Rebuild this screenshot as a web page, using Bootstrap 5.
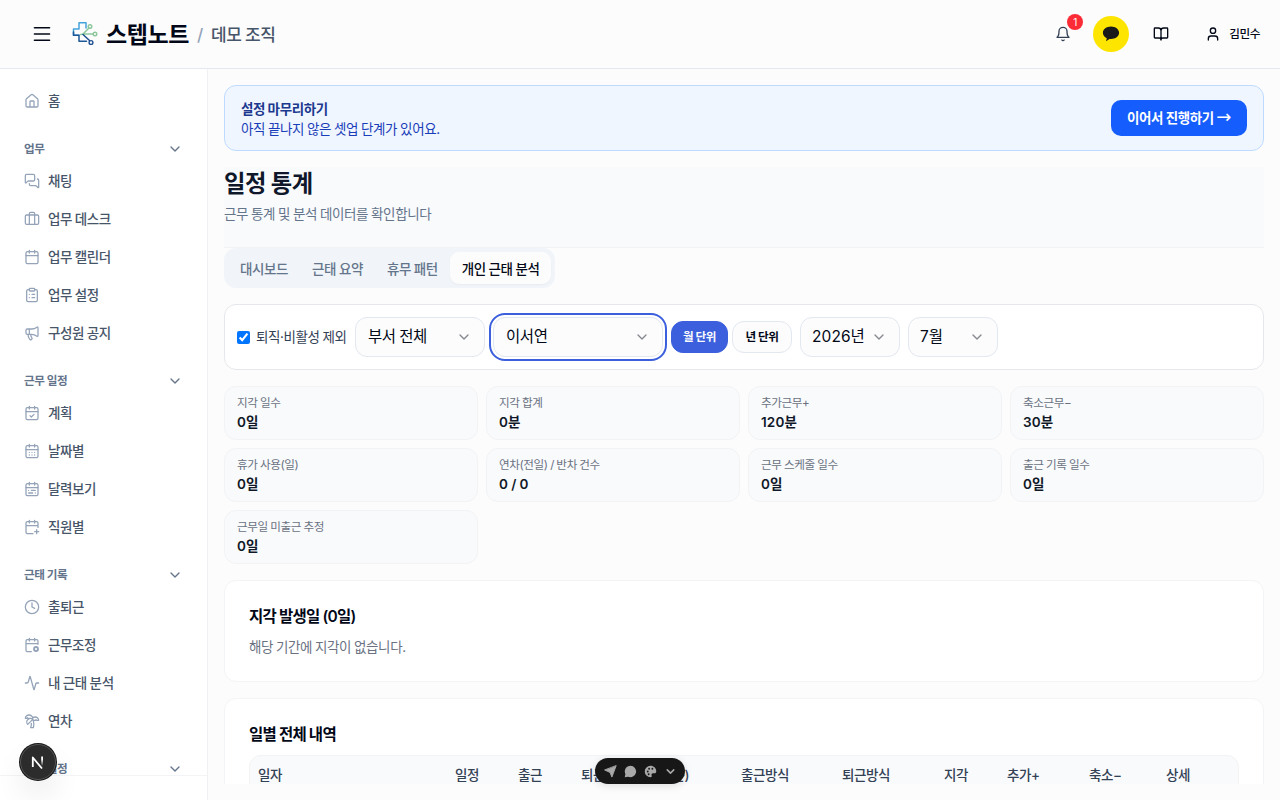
<!DOCTYPE html>
<html lang="ko">
<head>
<meta charset="utf-8">
<meta name="viewport" content="width=device-width, initial-scale=1">
<title>일정 통계 - 스텝노트</title>
<link href="https://cdn.jsdelivr.net/npm/bootstrap@5.3.0/dist/css/bootstrap.min.css" rel="stylesheet">
<style>
  body { font-family: Inter, "Noto Sans CJK KR", sans-serif; font-size: 13.5px; line-height: 20px; letter-spacing: -.03em; word-spacing: -.03em; color: #020817; background: #fcfcfc; height: 100vh; overflow: hidden; }
  svg { fill: none; stroke: currentColor; stroke-width: 2; stroke-linecap: round; stroke-linejoin: round; flex: none; display: block; }
  svg.i16 { width: 16px; height: 16px; }
  .topbar { height: 69px; border-bottom: 1px solid #e2e8f0; padding: 0 20px 0 32px; }
  .brand-name { font-size: 23px; font-weight: 700; line-height: 32px; padding-top: 2px; margin-left: 7px; }
  .org-name { font-size: 17px; font-weight: 500; color: #475569; line-height: 28px; padding-top: 2px; }
  .bell-count { top: -12px; right: -12px; width: 16px; height: 16px; font-size: 10px; line-height: 16px; background: #fb2c36; color: #fff; text-align: center; letter-spacing: 0; }
  .kakao { width: 36px; height: 36px; background: #fee500; color: #191919; }
  .side { width: 208px; background: #fff; border-right: 1px solid #f1f1f3; }
  .side-nav { height: 706px; padding: 13px 24px 0; overflow: hidden; }
  .side-foot { border-top: 1px solid #f3f4f6; }
  .side-item { height: 38px; gap: 8px; font-weight: 500; color: #475569; }
  .side-item svg { color: #94a3b8; stroke-width: 1.9; }
  .side-head { height: 27px; margin-top: 15px; font-size: 11.6px; font-weight: 600; color: #64748b; }
  .main-area { padding: 16px; overflow: hidden; }
  .main-clip { height: 699px; overflow: hidden; }
  .setup { height: 66px; padding: 1px 16px 0; background: #eff6ff; border: 1px solid #bedbff; border-radius: 12px; color: #193cb8; }
  .setup-title { font-weight: 600; color: #1c398e; }
  .setup-btn { width: 136px; height: 36px; text-align: center; white-space: nowrap; line-height: 37px; margin-top: -1px; background: #155dfc; color: #fff; font-weight: 600; border-radius: 10px; }
  .setup-btn span { font-family: "DejaVu Sans", sans-serif; font-size: 18px; font-weight: 400; line-height: 1; }
  .page-head { height: 81px; margin-top: 16px; padding-top: 1px; background: #f9fafc; border-bottom: 1px solid #f1f3f5; }
  .page-head h1 { font-size: 23.3px; font-weight: 700; line-height: 32px; color: #0f172a; margin: 0 0 4px; }
  .page-head p { color: #64748b; margin: 0; }
  .tabs { display: inline-flex; height: 40px; padding: 4px; background: #f1f5f9; border-radius: 12px; font-weight: 500; color: #64748b; }
  .tabs span { padding: 7px 12px 5px; border-radius: 9px; white-space: nowrap; }
  .tabs .on { background: #fcfcfc; color: #020817; box-shadow: 0 1px 2px rgba(0,0,0,.04); }
  .filters { height: 66px; margin-top: 16px; padding: 0 12px; background: #fff; border: 1px solid #e5e7eb; border-radius: 12px; }
  .filters input { width: 13px; height: 13px; margin: 0 6px 0 0; }
  .excl { width: 110px; margin-right: 8px; color: #334155; white-space: nowrap; }
  .pick { height: 40px; padding: 0 12px; font-size: 15.5px; border: 1px solid #e2e8f0; border-radius: 12px; background: #fcfcfc; white-space: nowrap; }
  .pick svg { color: #85888f; }
  .pick.numeric { letter-spacing: .005em; padding-left: 11px; }
  .pick.focused { outline: 2px solid #3b5fdd; outline-offset: 2px; }
  .unit { height: 32px; line-height: 30px; text-align: center; font-size: 11.6px; font-weight: 600; border: 1px solid #e2e8f0; border-radius: 12px; background: #fcfcfc; }
  .unit.on { background: #3b5fdd; border-color: #3b5fdd; color: #f8fafc; }
  .w130 { width: 130px; } .w170 { width: 170px; } .w57 { width: 57px; } .w60 { width: 60px; } .w100 { width: 100px; } .w90 { width: 90px; }
  .stats { display: grid; grid-template-columns: repeat(4, 1fr); gap: 8px; margin-top: 16px; }
  .stat { height: 54px; padding: 8px 12px 6px; background: #f9fafc; border: 1px solid #f1f3f5; border-radius: 12px; }
  .stat div { font-size: 11.6px; line-height: 16px; color: #6a7282; }
  .stat b { display: block; font-weight: 600; line-height: 20px; margin-top: 1px; color: #101828; letter-spacing: .01em; }
  .panel { margin-top: 16px; padding: 24px; background: #fff; border: 1px solid #f3f4f6; border-radius: 12px; }
  .panel h2 { font-size: 15.5px; font-weight: 600; line-height: 24px; margin: 0; letter-spacing: -.045em; }
  .tbl-wrap { margin-top: 8px; height: 200px; border: 1px solid #f1f3f5; border-radius: 12px; background: #f9fafc; overflow: hidden; }
  .tbl-wrap table { table-layout: fixed; width: 100%; }
  .tbl-wrap th { padding: 9px 8px; font-weight: 500; color: #334155; white-space: nowrap; }
  .next-badge { left: 20px; top: 744px; width: 36px; height: 36px; background: #2c2c2c; border: 1px solid #555; box-shadow: 0 0 0 1px #171717, 0 16px 32px -8px rgba(0,0,0,.24); }
  .dock { left: 595px; top: 758px; width: 90px; height: 26px; gap: 7px; background: #171717; color: #a8a8a8; border-radius: 13px; box-shadow: 0 2px 8px rgba(0,0,0,.12); }
  .dock svg { width: 13px; height: 13px; }
</style>
</head>
<body class="d-flex flex-column">
<svg width="0" height="0" class="position-absolute">
  <defs>
    <symbol id="cal" viewBox="0 0 24 24"><path d="M8 2v4M16 2v4M3 10h18"/><rect width="18" height="18" x="3" y="4" rx="2"/></symbol>
    <symbol id="chev" viewBox="0 0 24 24"><path d="m6 9 6 6 6-6"/></symbol>
  </defs>
</svg>

<header class="topbar d-flex align-items-center flex-shrink-0">
  <svg width="20" height="20" viewBox="0 0 24 24"><path d="M3 4.500h18M3 12h18M3 19.500h18"/></svg>
  <svg width="28" height="28" viewBox="0 0 28 28" style="margin-left:19px">
    <path d="M8 9V2.700h7V8M8 9H2.500v6.300H8" stroke="#45a3dc" stroke-width="1.500"/>
    <path d="M2.500 12v3.300H8v6h7.500" stroke="#1e5799" stroke-width="1.500"/>
    <path d="M9.500 14.500l4-.5H22M12 14l6-6" stroke="#8cc79a" stroke-width="1.500"/>
    <path d="M12 14.500l6.500 6" stroke="#1d4f91" stroke-width="1.500"/>
    <circle cx="19" cy="6.500" r="1.800" stroke="#8cc79a" stroke-width="1.400"/><circle cx="24" cy="14" r="1.800" stroke="#8cc79a" stroke-width="1.400"/><circle cx="20" cy="22.500" r="1.900" stroke="#1d4f91" stroke-width="1.400"/>
  </svg>
  <span class="brand-name">스텝노트</span>
  <span class="org-name ms-2" style="color:#94a3b8">/</span>
  <span class="org-name ms-2">데모 조직</span>
  <div class="d-flex align-items-center ms-auto">
    <span class="position-relative"><svg class="i16" viewBox="0 0 24 24" color="#334155"><path d="M6 8a6 6 0 0 1 12 0c0 7 3 9 3 9H3s3-2 3-9M10.300 21a1.940 1.940 0 0 0 3.400 0"/></svg><span class="bell-count position-absolute rounded-circle">1</span></span>
    <span class="kakao rounded-circle d-flex align-items-center justify-content-center" style="margin-left:22px"><svg width="18" height="18" viewBox="0 0 18 18"><path d="M9 1.500C4.500 1.500.9 4.300.9 7.800c0 2.300 1.600 4.300 3.900 5.400l-.8 3 3.500-2.300 1.500.1c4.500 0 8.100-2.800 8.100-6.200S13.500 1.500 9 1.500z" fill="currentColor" stroke="none"/></svg></span>
    <svg class="i16" viewBox="0 0 24 24" style="margin-left:24px"><path d="M12 7v14M3 18a1 1 0 0 1-1-1V4a1 1 0 0 1 1-1h5a4 4 0 0 1 4 4 4 4 0 0 1 4-4h5a1 1 0 0 1 1 1v13a1 1 0 0 1-1 1h-6a3 3 0 0 0-3 3 3 3 0 0 0-3-3z"/></svg>
    <svg class="i16" viewBox="0 0 24 24" style="margin-left:36px"><path d="M19 21v-2a4 4 0 0 0-4-4H9a4 4 0 0 0-4 4v2"/><circle cx="12" cy="7" r="4"/></svg>
    <span style="margin-left:8px;font-size:11.6px;font-weight:500">김민수</span>
  </div>
</header>

<div class="d-flex flex-grow-1">
  <aside class="side flex-shrink-0">
    <nav class="side-nav">
      <div class="side-item d-flex align-items-center"><svg class="i16" viewBox="0 0 24 24"><path d="M15 21v-8a1 1 0 0 0-1-1h-4a1 1 0 0 0-1 1v8M3 10a2 2 0 0 1 .709-1.528l7-5.999a2 2 0 0 1 2.582 0l7 5.999A2 2 0 0 1 21 10v9a2 2 0 0 1-2 2H5a2 2 0 0 1-2-2z"/></svg>홈</div>
      <div class="side-head d-flex align-items-center justify-content-between">업무<svg class="i16"><use href="#chev"/></svg></div>
      <div class="side-item d-flex align-items-center"><svg class="i16" viewBox="0 0 24 24"><path d="M16 10a2 2 0 0 1-2 2H6.828a2 2 0 0 0-1.414.586l-2.202 2.202A.71.71 0 0 1 2 14.286V4a2 2 0 0 1 2-2h10a2 2 0 0 1 2 2zM20 9a2 2 0 0 1 2 2v10.286a.71.71 0 0 1-1.212.502l-2.202-2.202A2 2 0 0 0 17.172 19H10a2 2 0 0 1-2-2v-1"/></svg>채팅</div>
      <div class="side-item d-flex align-items-center"><svg class="i16" viewBox="0 0 24 24"><path d="M16 20V4a2 2 0 0 0-2-2h-4a2 2 0 0 0-2 2v16"/><rect width="20" height="14" x="2" y="6" rx="2"/></svg>업무 데스크</div>
      <div class="side-item d-flex align-items-center"><svg class="i16"><use href="#cal"/></svg>업무 캘린더</div>
      <div class="side-item d-flex align-items-center"><svg class="i16" viewBox="0 0 24 24"><rect width="8" height="4" x="8" y="2" rx="1"/><path d="M16 4h2a2 2 0 0 1 2 2v14a2 2 0 0 1-2 2H6a2 2 0 0 1-2-2V6a2 2 0 0 1 2-2h2M12 11h4M12 16h4M8 11h.01M8 16h.01"/></svg>업무 설정</div>
      <div class="side-item d-flex align-items-center"><svg class="i16" viewBox="0 0 24 24"><path d="M11 6a13 13 0 0 0 8.400-2.800A1 1 0 0 1 21 4v12a1 1 0 0 1-1.600.8A13 13 0 0 0 11 14H5a2 2 0 0 1-2-2V8a2 2 0 0 1 2-2zM6 14a12 12 0 0 0 2.400 7.200 2 2 0 0 0 3.200-2.400A8 8 0 0 1 10 14M8 6v8"/></svg>구성원 공지</div>
      <div class="side-head d-flex align-items-center justify-content-between">근무 일정<svg class="i16"><use href="#chev"/></svg></div>
      <div class="side-item d-flex align-items-center"><svg class="i16" viewBox="0 0 24 24"><use href="#cal"/><path d="m9 16 2 2 4-4"/></svg>계획</div>
      <div class="side-item d-flex align-items-center"><svg class="i16" viewBox="0 0 24 24"><use href="#cal"/><path d="M8 14h.01M12 14h.01M16 14h.01M8 18h.01M12 18h.01M16 18h.01"/></svg>날짜별</div>
      <div class="side-item d-flex align-items-center"><svg class="i16" viewBox="0 0 24 24"><use href="#cal"/><path d="M17 14h-6M13 18H7M7 14h.01M17 18h.01"/></svg>달력보기</div>
      <div class="side-item d-flex align-items-center"><svg class="i16" viewBox="0 0 24 24"><path d="M16 19h6M16 2v4M19 16v6M21 12.598V6a2 2 0 0 0-2-2H5a2 2 0 0 0-2 2v14a2 2 0 0 0 2 2h8.500M3 10h18M8 2v4"/></svg>직원별</div>
      <div class="side-head d-flex align-items-center justify-content-between">근태 기록<svg class="i16"><use href="#chev"/></svg></div>
      <div class="side-item d-flex align-items-center"><svg class="i16" viewBox="0 0 24 24"><circle cx="12" cy="12" r="10"/><path d="M12 6v6l4 2"/></svg>출퇴근</div>
      <div class="side-item d-flex align-items-center"><svg class="i16" viewBox="0 0 24 24"><path d="M16 2v4M21 11V6a2 2 0 0 0-2-2H5a2 2 0 0 0-2 2v14a2 2 0 0 0 2 2h6M3 10h18M8 2v4"/><circle cx="18" cy="18" r="3" stroke-width="2.800"/></svg>근무조정</div>
      <div class="side-item d-flex align-items-center"><svg class="i16" viewBox="0 0 24 24"><path d="M22 12h-2.480a2 2 0 0 0-1.930 1.460l-2.350 8.360a.25.25 0 0 1-.48 0L9.240 2.180a.25.25 0 0 0-.48 0l-2.350 8.360A2 2 0 0 1 4.490 12H2"/></svg>내 근태 분석</div>
      <div class="side-item d-flex align-items-center"><svg class="i16" viewBox="0 0 24 24"><path d="M13 8c0-2.760-2.460-5-5.500-5S2 5.240 2 8h2l1-1 1 1h4M13 7.140A5.820 5.820 0 0 1 16.500 6c3.040 0 5.500 2.240 5.500 5h-3l-1-1-1 1h-3M5.890 9.710c-2.150 2.150-2.300 5.470-.35 7.430l4.240-4.250.7-.7.71-.71 2.120-2.120c-1.950-1.960-5.270-1.800-7.420.35M11 15.500c.5 2.500-.17 4.500-1 6.500h4c2-5.500-.5-12-1-14"/></svg>연차</div>
      <div class="side-head d-flex align-items-center justify-content-between">급여 설정<svg class="i16"><use href="#chev"/></svg></div>
    </nav>
    <div class="side-foot"></div>
  </aside>

  <main class="main-area flex-grow-1">
    <div class="main-clip">
      <div class="setup d-flex align-items-center justify-content-between">
        <div><div class="setup-title">설정 마무리하기</div><div>아직 끝나지 않은 셋업 단계가 있어요.</div></div>
        <div class="setup-btn">이어서 진행하기 <span>→</span></div>
      </div>
      <div class="page-head"><h1>일정 통계</h1><p>근무 통계 및 분석 데이터를 확인합니다</p></div>
      <div class="d-flex"><div class="tabs"><span>대시보드</span><span>근태 요약</span><span>휴무 패턴</span><span class="on">개인 근태 분석</span></div></div>

      <div class="filters d-flex align-items-center">
        <label class="excl d-flex align-items-center"><input type="checkbox" checked>퇴직·비활성 제외</label>
        <div class="pick w130 me-2 d-flex align-items-center justify-content-between">부서 전체<svg class="i16"><use href="#chev"/></svg></div>
        <div class="pick focused w170 me-2 d-flex align-items-center justify-content-between">이서연<svg class="i16"><use href="#chev"/></svg></div>
        <div class="unit on w57 me-1">월 단위</div>
        <div class="unit w60 me-2">년 단위</div>
        <div class="pick numeric w100 me-2 d-flex align-items-center justify-content-between">2026년<svg class="i16"><use href="#chev"/></svg></div>
        <div class="pick numeric w90 d-flex align-items-center justify-content-between">7월<svg class="i16"><use href="#chev"/></svg></div>
      </div>

      <div class="stats">
        <div class="stat"><div>지각 일수</div><b>0일</b></div>
        <div class="stat"><div>지각 합계</div><b>0분</b></div>
        <div class="stat"><div>추가근무+</div><b>120분</b></div>
        <div class="stat"><div>축소근무−</div><b>30분</b></div>
        <div class="stat"><div>휴가 사용(일)</div><b>0일</b></div>
        <div class="stat"><div>연차(전일) / 반차 건수</div><b>0 / 0</b></div>
        <div class="stat"><div>근무 스케줄 일수</div><b>0일</b></div>
        <div class="stat"><div>출근 기록 일수</div><b>0일</b></div>
        <div class="stat"><div>근무일 미출근 추정</div><b>0일</b></div>
      </div>

      <section class="panel" style="height:102px">
        <h2>지각 발생일 (0일)</h2>
        <div style="margin-top:8px;color:#6a7282">해당 기간에 지각이 없습니다.</div>
      </section>

      <section class="panel">
        <h2>일별 전체 내역</h2>
        <div class="tbl-wrap">
          <table>
            <colgroup><col style="width:197px"><col style="width:63px"><col style="width:63px"><col style="width:63px"><col style="width:97px"><col style="width:101px"><col style="width:102px"><col style="width:63px"><col style="width:82px"><col style="width:77px"><col></colgroup>
            <thead><tr><th>일자</th><th>일정</th><th>출근</th><th>퇴근</th><th>근무(분)</th><th>출근방식</th><th>퇴근방식</th><th>지각</th><th>추가+</th><th>축소−</th><th>상세</th></tr></thead>
          </table>
        </div>
      </section>
    </div>
  </main>
</div>

<div class="next-badge position-absolute rounded-circle d-flex align-items-center justify-content-center">
  <svg width="16" height="16" viewBox="0 0 16 16"><defs><linearGradient id="fade" x1="0" y1="0" x2="0" y2="1"><stop offset=".3" stop-color="#fff"/><stop offset="1" stop-color="#fff" stop-opacity="0"/></linearGradient></defs><path d="M2.800 13V3.500L12 14.500" stroke="#fff" stroke-width="1.800" stroke-linecap="butt"/><rect x="11.200" y="2.500" width="1.800" height="9.500" fill="url(#fade)" stroke="none"/></svg>
</div>
<div class="dock position-absolute d-flex align-items-center justify-content-center">
  <svg viewBox="0 0 14 14"><path d="M13 1 8.500 13 6.500 8 1 5.500z" fill="currentColor" stroke-width="1"/></svg>
  <svg viewBox="0 0 14 14"><path d="M7 .8a6.200 6.200 0 1 1-2.600 11.900L.8 13.200l.7-3.400A6.200 6.200 0 0 1 7 .8z" fill="currentColor" stroke="none"/></svg>
  <svg viewBox="0 0 14 14"><path d="M7 .8a6.200 6.200 0 0 0 0 12.400c1.300 0 1.600-.9 1.200-1.900-.5-1.400.3-2.300 1.600-2.300h1.600c1.200 0 1.800-.9 1.800-2.200C13.200 3.400 10.400.8 7 .8z" fill="currentColor" stroke="none"/><g fill="#171717" stroke="none"><circle cx="4" cy="7" r="1"/><circle cx="5.500" cy="4" r="1"/><circle cx="9" cy="4" r="1"/><circle cx="5" cy="10" r="1"/></g></svg>
  <svg viewBox="0 0 24 24"><path stroke-width="2.800" d="m6 9 6 6 6-6"/></svg>
</div>
<script src="https://cdn.jsdelivr.net/npm/bootstrap@5.3.0/dist/js/bootstrap.bundle.min.js"></script>
</body>
</html>
